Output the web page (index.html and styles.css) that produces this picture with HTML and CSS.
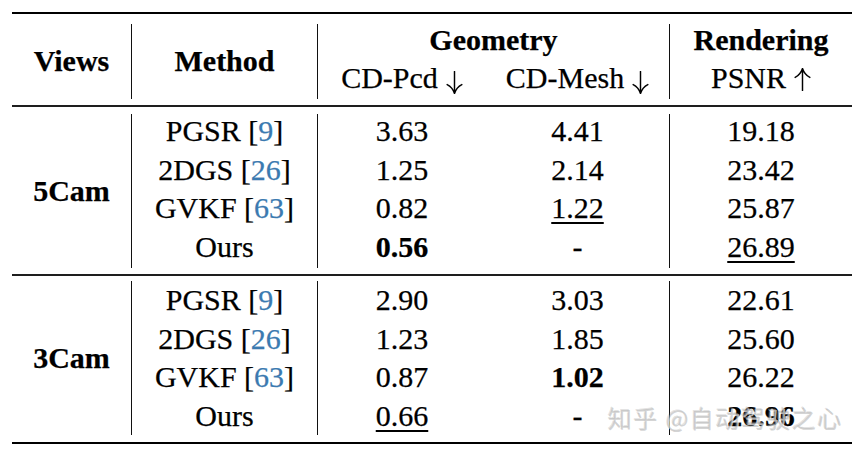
FILE: index.html
```html
<!DOCTYPE html>
<html lang="en">
<head>
<meta charset="utf-8">
<title>Table</title>
<link rel="stylesheet" href="styles.css">
</head>
<body>
<div class="page">
  <div class="table">
    <div class="rule top"></div>
    <div class="grid head">
      <div class="cell views vl b">Views</div>
      <div class="cell method vl b">Method</div>
      <div class="cell geo vl b">Geometry</div>
      <div class="cell rend b">Rendering</div>
      <div class="cell sub1">CD-Pcd<svg class="arr" viewBox="0 0 16 22" aria-label="↓"><path d="M8 0.5V21M1 13Q6 15.5 8 21.5Q10 15.5 15 13"/></svg></div>
      <div class="cell sub2 vl">CD-Mesh<svg class="arr" viewBox="0 0 16 22" aria-label="↓"><path d="M8 0.5V21M1 13Q6 15.5 8 21.5Q10 15.5 15 13"/></svg></div>
      <div class="cell sub3">PSNR<svg class="arr up" viewBox="0 0 16 22" aria-label="↑"><path d="M8 21.5V1M1 9Q6 6.5 8 0.5Q10 6.5 15 9"/></svg></div>
    </div>
    <div class="rule mid"></div>
    <div class="grid body g1">
      <div class="cell group vl b">5Cam</div>
      <div class="cell vl">PGSR [<span class="cite">9</span>]</div><div class="cell">3.63</div><div class="cell vl">4.41</div><div class="cell">19.18</div>
      <div class="cell vl">2DGS [<span class="cite">26</span>]</div><div class="cell">1.25</div><div class="cell vl">2.14</div><div class="cell">23.42</div>
      <div class="cell vl">GVKF [<span class="cite">63</span>]</div><div class="cell">0.82</div><div class="cell vl"><span class="u">1.22</span></div><div class="cell">25.87</div>
      <div class="cell vl">Ours</div><div class="cell b">0.56</div><div class="cell vl">-</div><div class="cell"><span class="u">26.89</span></div>
    </div>
    <div class="rule mid"></div>
    <div class="grid body g2">
      <div class="cell group vl b">3Cam</div>
      <div class="cell vl">PGSR [<span class="cite">9</span>]</div><div class="cell">2.90</div><div class="cell vl">3.03</div><div class="cell">22.61</div>
      <div class="cell vl">2DGS [<span class="cite">26</span>]</div><div class="cell">1.23</div><div class="cell vl">1.85</div><div class="cell">25.60</div>
      <div class="cell vl">GVKF [<span class="cite">63</span>]</div><div class="cell">0.87</div><div class="cell vl b">1.02</div><div class="cell">26.22</div>
      <div class="cell vl">Ours</div><div class="cell"><span class="u">0.66</span></div><div class="cell vl">-</div><div class="cell b">26.96</div>
    </div>
    <div class="rule bottom"></div>
    <div class="watermark">知乎 @自动驾驶之心</div>
  </div>
</div>
</body>
</html>
```

FILE: styles.css
```css
html, body {
  margin: 0;
  padding: 0;
  background: #fff;
}
.page {
  padding: 12px 0 0 12px;
}
.table {
  position: relative;
  width: 840px;
  font-family: "Liberation Serif", "Times New Roman", serif;
  font-size: 30px;
  color: #000;
  -webkit-text-stroke: 0.25px #000;
}
.rule {
  background: #000;
}
.rule.top { height: 2px; }
.rule.mid { height: 2px; background: #1e1e1e; }
.rule.bottom { height: 2px; }
.grid {
  display: grid;
  grid-template-columns: 120px 186px 168px 184px 182px;
}
.cell {
  text-align: center;
  white-space: nowrap;
}
.vl {
  border-right: 1px solid #111;
}
.b { font-weight: bold; }
.head {
  padding: 10px 0 6px;
  grid-template-rows: 35px 40px;
  line-height: 35px;
}
.head .views { grid-column: 1; grid-row: 1 / 3; display: flex; align-items: center; justify-content: center; padding-bottom: 3px; }
.head .method { grid-column: 2; grid-row: 1 / 3; display: flex; align-items: center; justify-content: center; padding-bottom: 3px; }
.head .geo { grid-column: 3 / 5; grid-row: 1; line-height: 31px; }
.head .rend { grid-column: 5; grid-row: 1; line-height: 31px; }
.head .sub1 { grid-column: 3; grid-row: 2; line-height: 38px; }
.head .sub2 { grid-column: 4; grid-row: 2; line-height: 38px; }
.head .sub3 { grid-column: 5; grid-row: 2; line-height: 38px; }
.arr {
  width: 17px;
  height: 23px;
  margin-left: 8px;
  vertical-align: -6px;
  fill: none;
  stroke: #000;
  stroke-width: 1.4;
  stroke-linecap: round;
}
.arr.up { vertical-align: -3px; }
.body {
  grid-template-rows: repeat(4, 38.5px);
  line-height: 38.5px;
}
.g1 { padding: 7px 0 6px; }
.g1 .cell { line-height: 34.5px; }
.g2 { padding: 5px 0 7px; }
.group {
  grid-column: 1;
  grid-row: 1 / 5;
  display: flex;
  align-items: center;
  justify-content: center;
}
.cite { color: #3b7ab0; -webkit-text-stroke-color: #3b7ab0; }
.u {
  text-decoration: underline;
  text-decoration-thickness: 1.5px;
  text-underline-offset: 4px;
}
.watermark {
  position: absolute;
  left: 596px;
  top: 391px;
  font-family: "Noto Sans CJK SC", sans-serif;
  font-size: 24px;
  line-height: 30px;
  color: rgba(175, 175, 175, 0.55);
  -webkit-text-stroke: 0;
  text-shadow: 1px 1px 0 rgba(255, 255, 255, 0.7), -1px -1px 0 rgba(110, 110, 110, 0.2);
  letter-spacing: 1.5px;
  white-space: nowrap;
}
```
